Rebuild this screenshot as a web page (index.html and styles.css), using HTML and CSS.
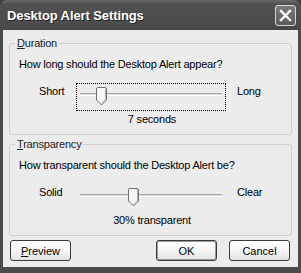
FILE: index.html
```html
<!DOCTYPE html>
<html lang="en">

<head>
  <meta charset="utf-8">
  <title>Desktop Alert Settings</title>
  <link rel="stylesheet" href="styles.css">
</head>

<body>
  <div class="window">
    <!-- title bar -->
    <div class="titlebar">
      <span class="title">Desktop Alert Settings</span>
      <span class="close">
        <svg width="13" height="13" viewBox="0 0 13 13">
          <path d="M2 2 L11 11 M11 2 L2 11" stroke="#fff" stroke-width="2.4" stroke-linecap="square"/>
        </svg>
      </span>
    </div>

    <div class="client">
      <!-- duration -->
      <fieldset class="group">
        <legend><u>D</u>uration</legend>
        <div class="question">How long should the Desktop Alert appear?</div>
        <div class="row">
          <span class="label">Short</span>
          <div class="slider focused">
            <div class="track"></div>
            <svg class="thumb" style="left:19px" width="11" height="19" viewBox="0 0 11 19">
              <path d="M0.5 2 Q0.5 0.5 2 0.5 H9 Q10.5 0.5 10.5 2 V13 L5.5 18 L0.5 13 Z" fill="#f6f6f6" stroke="#707070"/>
              <path d="M9.5 2 V12.6 L5.5 16.6" fill="none" stroke="#b4b4b4"/>
            </svg>
          </div>
          <span class="label right">Long</span>
        </div>
        <div class="value">7 seconds</div>
      </fieldset>

      <!-- transparency -->
      <fieldset class="group">
        <legend><u>T</u>ransparency</legend>
        <div class="question">How transparent should the Desktop Alert be?</div>
        <div class="row">
          <span class="label">Solid</span>
          <div class="slider">
            <div class="track"></div>
            <svg class="thumb" style="left:51px" width="11" height="19" viewBox="0 0 11 19">
              <path d="M0.5 2 Q0.5 0.5 2 0.5 H9 Q10.5 0.5 10.5 2 V13 L5.5 18 L0.5 13 Z" fill="#f6f6f6" stroke="#707070"/>
              <path d="M9.5 2 V12.6 L5.5 16.6" fill="none" stroke="#b4b4b4"/>
            </svg>
          </div>
          <span class="label right">Clear</span>
        </div>
        <div class="value">30% transparent</div>
      </fieldset>

      <!-- buttons -->
      <div class="buttons">
        <button class="button"><u>P</u>review</button>
        <span class="spacer"></span>
        <button class="button default">OK</button>
        <button class="button">Cancel</button>
      </div>
    </div>
  </div>
</body>

</html>
```

FILE: styles.css
```css
body {
  margin: 0;
  background: #3c3c3c;
  font-family: "Liberation Sans", Arial, sans-serif;
  font-size: 11px;
  color: #000;
}

.window {
  width: 301px;
  height: 273px;
  box-sizing: border-box;
  padding: 0 3px 6px 3px;
  background: #4a4a4a;
  border-radius: 7px 7px 0 0;
}

.titlebar {
  height: 30px;
  margin: 0 -3px;
  padding: 0 5px 0 7px;
  display: flex;
  align-items: center;
  justify-content: space-between;
  background: linear-gradient(#6a6a6a, #505050 4px, #4c4c4c 24px, #454545);
  border-radius: 7px 7px 0 0;
}

.title {
  color: #fff;
  font-weight: bold;
  font-size: 13px;
  letter-spacing: -0.1px;
  text-shadow: 1px 1px 0 #222;
}

.close {
  width: 19px;
  height: 19px;
  display: flex;
  align-items: center;
  justify-content: center;
  border: 1px solid #d8d8d8;
  border-radius: 3px;
  background: linear-gradient(#7a7a7a, #5a5a5a);
}

.client {
  height: 237px;
  box-sizing: border-box;
  padding: 7px 6px 0 6px;
  background: #ececec;
}

.group {
  margin: 0 0 3px 0;
  padding: 8px 0 0 0;
  min-width: 0;
  height: 98px;
  box-sizing: border-box;
  border: 1px solid #cfcfcf;
  border-radius: 3px;
  letter-spacing: -0.2px;
}

.group legend {
  margin-left: 5px;
  padding: 0 2px;
  line-height: 13px;
  color: #222;
}

.question {
  padding-left: 9px;
  line-height: 13px;
}

.row {
  display: flex;
  align-items: flex-start;
  margin-top: 12px;
  padding-left: 29px;
}

.label {
  width: 37px;
  line-height: 13px;
  margin-top: 2px;
}

.label.right {
  width: auto;
  margin-left: 11px;
}

.slider {
  position: relative;
  width: 150px;
  height: 28px;
  box-sizing: border-box;
  border: 1px dotted transparent;
}

.slider.focused {
  border-color: #000;
}

.track {
  margin: 9px 3px 0 3px;
  height: 1px;
  border-top: 1px solid #a8a8a8;
  border-bottom: 1px solid #fff;
  background: #dcdcdc;
}

.thumb {
  position: absolute;
  top: 3px;
}

.value {
  margin-top: 2px;
  padding-left: 67px;
  width: 150px;
  text-align: center;
  line-height: 13px;
}

.buttons {
  display: flex;
  gap: 12px;
  padding: 1px 2px 0 1px;
}

.spacer {
  flex: 1;
}

.button {
  width: 61px;
  height: 21px;
  padding: 0;
  font-family: inherit;
  font-size: 11px;
  color: #000;
  background: linear-gradient(#ffffff, #f4f4f4 60%, #e2e2e2);
  border: 1px solid #3a3a3a;
  border-radius: 3px;
}

.button.default {
  box-shadow: inset 0 0 0 1px #9a9a9a;
}
```
